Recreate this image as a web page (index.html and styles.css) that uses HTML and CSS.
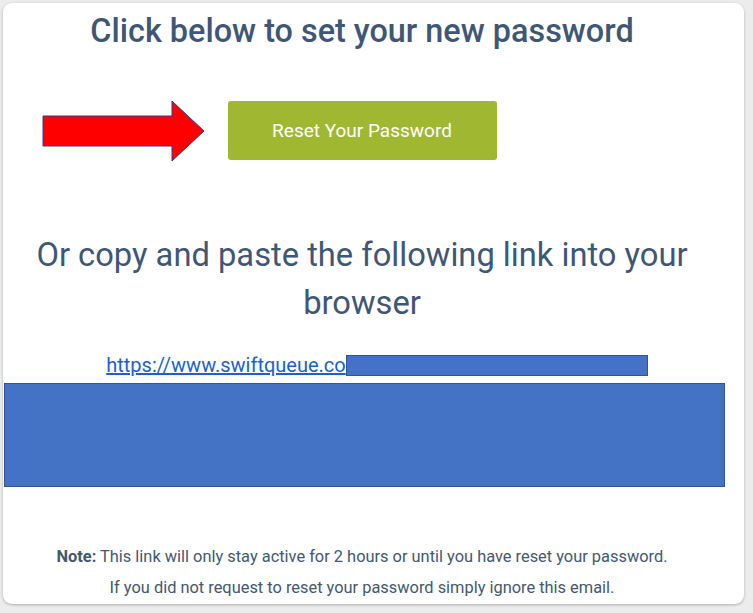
FILE: index.html
```html
<!DOCTYPE html>
<html lang="en">
<head>
    <meta charset="UTF-8">
    <meta name="viewport" content="width=device-width, initial-scale=1.0">
    <title>Reset Password</title>
    <link rel="stylesheet" href="styles.css">
</head>
<body>
    <div class="card">
        <h1 class="title">Click below to set your new password</h1>

        <div class="action-row">
            <svg class="arrow" width="164" height="62" viewBox="0 0 164 62">
                <polygon points="1,16 130,16 130,1 162,31 130,61 130,46 1,46" fill="#ff0000" stroke="#2f3f8f" stroke-width="1"/>
            </svg>
            <a class="reset-btn" href="#">Reset Your Password</a>
        </div>

        <h2 class="subtitle">Or copy and paste the following link into your browser</h2>

        <div class="link-line">
            <a class="link" href="#">https://www.swiftqueue.co</a><span class="redact-small"></span>
        </div>
        <div class="redact-big"></div>

        <p class="note"><strong>Note:</strong> This link will only stay active for 2 hours or until you have reset your password.<br>If you did not request to reset your password simply ignore this email.</p>
    </div>
</body>
</html>
```

FILE: styles.css
```css
body {
    margin: 0;
    background-color: #ececec;
    font-family: Roboto, "Liberation Sans", sans-serif;
    height: 613px;
    overflow: hidden;
}

.card {
    margin: 3px 9px 0 3px;
    height: 601px;
    background-color: #ffffff;
    border-radius: 9px;
    box-shadow: 0 1px 3px rgba(0, 0, 0, 0.25);
    padding-right: 23px;
    box-sizing: border-box;
    display: flex;
    flex-direction: column;
    align-items: center;
}

.card > * {
    flex-shrink: 0;
}

.title {
    margin: 10px 0 0;
    font-size: 32.4px;
    font-weight: 500;
    color: #3f5775;
    line-height: 36px;
}

.action-row {
    position: relative;
    margin-top: 52px;
}

.arrow {
    position: absolute;
    top: -1px;
    right: 100%;
    margin-right: 22px;
    display: block;
}

.reset-btn {
    display: flex;
    align-items: center;
    justify-content: center;
    width: 269px;
    height: 59px;
    background-color: #a0b732;
    color: #ffffff;
    font-size: 19px;
    text-decoration: none;
    border-radius: 3px;
}

.subtitle {
    margin: 71px 0 0;
    width: 680px;
    text-align: center;
    font-size: 32.7px;
    font-weight: 400;
    color: #3f5775;
    line-height: 48px;
}

.link-line {
    margin-top: 26px;
    margin-left: 30px;
    display: flex;
    align-items: center;
}

.link {
    color: #1a5fd6;
    font-size: 20px;
    line-height: 24px;
}

.redact-small {
    display: block;
    width: 300px;
    height: 19px;
    background-color: #4472c4;
    border: 1px solid #2f5597;
}

.redact-big {
    align-self: flex-start;
    margin-top: 6px;
    margin-left: 1px;
    width: 719px;
    height: 102px;
    background-color: #4472c4;
    border: 1px solid #2f5597;
}

.note {
    margin: 54px 0 0;
    text-align: center;
    font-size: 16.4px;
    line-height: 31px;
    color: #44586f;
}

.note strong {
    font-weight: 700;
}
```
